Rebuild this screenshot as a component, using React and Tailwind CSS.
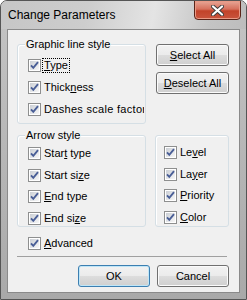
import React from 'react';

const font = { fontFamily: '"Liberation Sans", Arial, sans-serif' };

const CheckIcon = () => (
    <svg width="13" height="13" viewBox="0 0 13 13" className="shrink-0">
        <defs>
            <linearGradient id="cbfill" x1="0" y1="0" x2="1" y2="1">
                <stop offset="0" stopColor="#cbcfd5" />
                <stop offset="1" stopColor="#f7f7f7" />
            </linearGradient>
        </defs>
        <rect x="0.5" y="0.5" width="12" height="12" fill="#fff" stroke="#8e8f8f" />
        <rect x="2" y="2" width="9" height="9" fill="url(#cbfill)" />
        <path d="M3 6.3 L5.3 8.8 L10 3.2" fill="none" stroke="#4a5f97" strokeWidth="1.9" />
    </svg>
);

const Check = ({ children, focused, labelClass = '' }) => (
    <div className="flex items-center h-[13px] text-[11px] leading-[13px] text-black whitespace-nowrap">
        <CheckIcon />
        {focused ? (
            <span className="ml-[1px] px-[1px] border border-dotted border-black leading-[13px]">{children}</span>
        ) : (
            <span className={`ml-[3px] ${labelClass}`}>{children}</span>
        )}
    </div>
);

const Group = ({ label, className, children }) => (
    <div className={`relative rounded-[3px] border border-[#d5dfe5] shadow-[inset_1px_1px_0_#fff] ${className}`}>
        {label && (
            <span className="absolute left-[7px] -top-[8px] px-[1px] bg-[#f0f0f0] text-[11px] leading-[14px] text-black whitespace-nowrap">
                {label}
            </span>
        )}
        {children}
    </div>
);

const Button = ({ children, primary, className }) => (
    <div
        className={`flex items-center justify-center rounded-[3px] border text-[11px] text-black bg-[linear-gradient(to_bottom,#f2f2f2_0%,#ebebeb_50%,#dddddd_50%,#cfcfcf_100%)] ${
            primary
                ? 'border-[#3c7fb1] shadow-[inset_0_0_0_1px_#bfe6f8]'
                : 'border-[#707070] shadow-[inset_0_0_0_1px_#fbfbfb]'
        } ${className}`}
    >
        {children}
    </div>
);

const App = () => {
    return (
        <div className="w-[247px] h-[300px] flex flex-col rounded-t-[7px] border border-[#555] bg-[linear-gradient(to_bottom,#cfcfcf_0px,#c2c2c2_28px,#a9a9a9_100%)] overflow-hidden" style={font}>
            {/* title bar */}
            <div className="h-[28px] shrink-0 flex justify-between bg-[linear-gradient(100deg,#c6c6c6_0%,#cdcdcd_35%,#e4e4e4_62%,#c4c4c4_85%,#bdbdbd_100%)]">
                <span className="ml-[7px] mt-[7px] text-[12px] leading-[15px] text-black">Change Parameters</span>
                <div className="mr-[5px] w-[47px] h-[20px] -mt-px flex items-center justify-center rounded-b-[4px] border border-[#5a2419] bg-[linear-gradient(to_bottom,#e8a797_0%,#d6705c_45%,#c2432a_55%,#c9543d_100%)] shadow-[inset_0_0_0_1px_#e99a86]">
                    <svg width="13" height="11" viewBox="0 0 13 11">
                        <path d="M2 1.5 L11 9.5 M11 1.5 L2 9.5" stroke="#3d3d3d" strokeWidth="4" strokeLinecap="round" />
                        <path d="M2 1.5 L11 9.5 M11 1.5 L2 9.5" stroke="#ffffff" strokeWidth="2.2" strokeLinecap="round" />
                    </svg>
                </div>
            </div>

            {/* client */}
            <div className="mx-[6px] mb-[6px] flex-1 border border-[#8a8a8a] bg-[#f0f0f0] pl-[9px] pt-[14px] flex flex-col">
                <div className="flex gap-[10px]">
                    <Group label="Graphic line style" className="w-[129px] h-[80px]">
                        <div className="pl-[10px] pt-[14px] w-[126px] overflow-hidden flex flex-col gap-[9px]">
                            <Check focused><span className="underline">T</span>ype</Check>
                            <Check>Thick<span className="underline">n</span>ess</Check>
                            <Check labelClass="tracking-[0.3px]">Dashes scale factor</Check>
                        </div>
                    </Group>
                    <div className="flex flex-col gap-[6px] w-[73px]">
                        <Button className="h-[22px]"><span className="underline">S</span>elect All</Button>
                        <Button className="h-[22px]"><span className="underline">D</span>eselect All</Button>
                    </div>
                </div>

                <div className="flex gap-[9px] mt-[11px]">
                    <Group label="Arrow style" className="w-[129px] h-[92px]">
                        <div className="pl-[10px] pt-[11px] flex flex-col gap-[8.7px]">
                            <Check>Star<span className="underline">t</span> type</Check>
                            <Check>Start si<span className="underline">z</span>e</Check>
                            <Check><span className="underline">E</span>nd type</Check>
                            <Check>End si<span className="underline">z</span>e</Check>
                        </div>
                    </Group>
                    <Group className="w-[74px] h-[92px]">
                        <div className="pl-[8px] pt-[10px] flex flex-col gap-[8.7px]">
                            <Check>Le<span className="underline">v</span>el</Check>
                            <Check>La<span className="underline">y</span>er</Check>
                            <Check><span className="underline">P</span>riority</Check>
                            <Check><span className="underline">C</span>olor</Check>
                        </div>
                    </Group>
                </div>

                <div className="mt-[10px] pl-[11px]">
                    <Check><span className="underline">A</span>dvanced</Check>
                </div>

                <div className="mt-[6px] w-[210px] h-px bg-[#a0a0a0]" />

                <div className="mt-[8px] flex gap-[7px] pl-[61px]">
                    <Button primary className="w-[72px] h-[22px]">OK</Button>
                    <Button className="w-[72px] h-[22px]">Cancel</Button>
                </div>
            </div>
        </div>
    );
};

export default App;
